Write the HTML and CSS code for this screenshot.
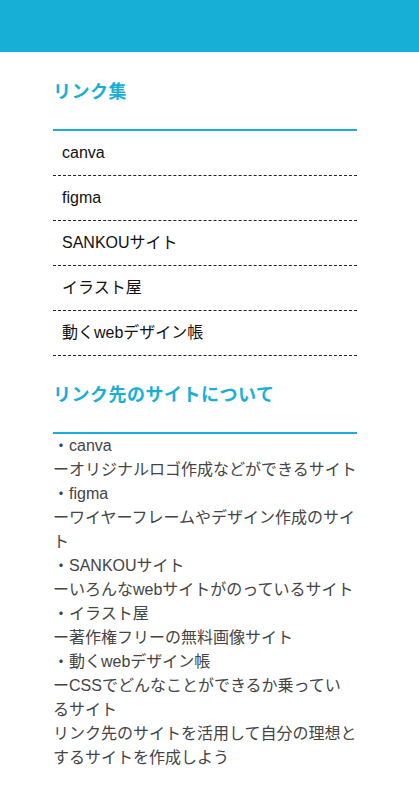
FILE: index.html
```html
<!DOCTYPE html>
<html lang="ja">
<head>
<meta charset="utf-8">
<title>リンク集</title>
<link rel="stylesheet" href="styles.css">
</head>
<body>
<header class="site-header"></header>
<main class="content">
  <section class="block">
    <h2 class="block-title">リンク集</h2>
    <ul class="link-list">
      <li class="link-item">canva</li>
      <li class="link-item">figma</li>
      <li class="link-item">SANKOUサイト</li>
      <li class="link-item">イラスト屋</li>
      <li class="link-item">動くwebデザイン帳</li>
    </ul>
  </section>
  <section class="block">
    <h2 class="block-title">リンク先のサイトについて</h2>
    <p class="about">・canva<br>ーオリジナルロゴ作成などができるサイト<br>・figma<br>ーワイヤーフレームやデザイン作成のサイト<br>・SANKOUサイト<br>ーいろんなwebサイトがのっているサイト<br>・イラスト屋<br>ー著作権フリーの無料画像サイト<br>・動くwebデザイン帳<br>ーCSSでどんなことができるか乗ってい<br>るサイト<br>リンク先のサイトを活用して自分の理想とするサイトを作成しよう</p>
  </section>
</main>
</body>
</html>
```

FILE: styles.css
```css
html, body {
  margin: 0;
  padding: 0;
  background: #fff;
}

body {
  font-family: "Liberation Sans", "Noto Sans CJK JP", sans-serif;
  color: #111;
}

.site-header {
  height: 52px;
  background: #18afd6;
}

.content {
  width: 304px;
  margin-left: 53px;
}

.block-title {
  margin: 24px 0 0;
  padding-bottom: 25px;
  border-bottom: 2px solid #18afd6;
  font-family: "Noto Sans CJK JP", sans-serif;
  font-size: 18px;
  line-height: 27px;
  font-weight: 700;
  color: #18afd6;
  letter-spacing: 0.5px;
}

.block:first-child .block-title {
  margin-top: 25px;
}

.link-list {
  list-style: none;
  margin: 0;
  padding: 0;
}

.link-item {
  height: 44px;
  line-height: 44px;
  padding-left: 9px;
  border-bottom: 1px dashed #222;
  font-size: 16px;
  color: #111;
}

.about {
  margin: 0;
  font-size: 16px;
  line-height: 24px;
  color: #444;
}
```
